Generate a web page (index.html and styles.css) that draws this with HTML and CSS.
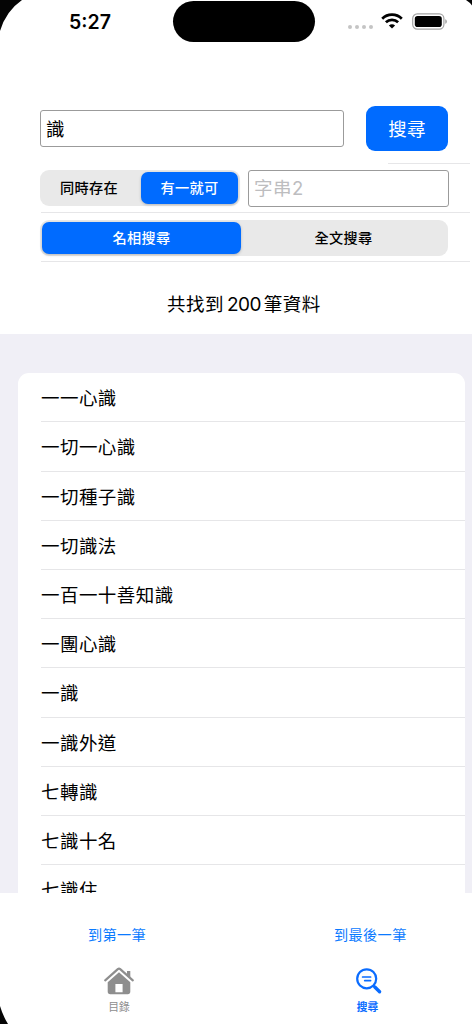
FILE: index.html
```
<!DOCTYPE html>
<html lang="zh-Hant">
<head>
    <meta charset="UTF-8">
    <meta name="viewport" content="width=device-width, initial-scale=1.0">
    <title>搜尋</title>
    <link rel="stylesheet" href="styles.css">
</head>
<body>
    <div class="screen">
        <header class="status-bar">
            <span class="time">5:27</span>
            <div class="island"></div>
            <div class="status-icons">
                <div class="dots"><i></i><i></i><i></i><i></i></div>
                <svg class="wifi" width="22" height="16" viewBox="0 0 22 16" fill="none" stroke="#000" stroke-width="2.7">
                    <path d="M1.2 5.7C6.6.3 15.4.3 20.8 5.7"/>
                    <path d="M4.9 9.3C8.3 6 13.7 6 17.1 9.3"/>
                    <path d="M11 15.6 7.9 12.4C9.6 10.8 12.4 10.8 14.1 12.4Z" fill="#000" stroke="none"/>
                </svg>
                <svg class="battery" width="36" height="17" viewBox="0 0 36 17">
                    <rect x=".7" y=".9" width="31.2" height="15.2" rx="4.6" fill="#fff" stroke="#a3a3a3" stroke-width="1.2"/>
                    <rect x="2.8" y="3" width="27" height="11" rx="2.8"/>
                    <path d="M33.3 6.2c2 .6 2 4 0 4.6z" fill="#999"/>
                </svg>
            </div>
        </header>

        <section class="search-form">
            <div class="form-row row-keyword">
                <input class="field" type="text" value="識">
                <button class="btn-search">搜尋</button>
            </div>
            <div class="form-row row-mode">
                <div class="segment segment-mode">
                    <span class="option">同時存在</span>
                    <span class="option active">有一就可</span>
                </div>
                <input class="field field-second" type="text" placeholder="字串2">
            </div>
            <div class="form-row row-scope">
                <div class="segment segment-scope">
                    <span class="option active">名相搜尋</span>
                    <span class="option">全文搜尋</span>
                </div>
            </div>
            <p class="result-count">共找到<span class="count">200</span>筆資料</p>
        </section>

        <main class="results">
            <ul class="result-list">
                <li>一一心識</li>
                <li>一切一心識</li>
                <li>一切種子識</li>
                <li>一切識法</li>
                <li>一百一十善知識</li>
                <li>一團心識</li>
                <li>一識</li>
                <li>一識外道</li>
                <li>七轉識</li>
                <li>七識十名</li>
                <li>七識住</li>
            </ul>
        </main>

        <footer class="bottom">
            <div class="jump">
                <a class="jump-first">到第一筆</a>
                <a class="jump-last">到最後一筆</a>
            </div>
            <nav class="tabs">
                <a class="tab tab-home">
                    <svg width="32" height="30" viewBox="0 0 32 30">
                        <path d="M2.2 14.3 14.8 3.2Q16 2.2 17.2 3.2L29.8 14.3" fill="none" stroke="#8e8e8e" stroke-width="2.2" stroke-linecap="round"/>
                        <path d="M24 5h3.3v6.6L24 8.7z" fill="#8e8e8e"/>
                        <path fill-rule="evenodd" d="M16 6.3 27.3 16.2V25.6Q27.3 28.2 24.7 28.2H7.3Q4.7 28.2 4.7 25.6V16.2ZM12.4 18V26.2H19.6V18Z" fill="#8e8e8e"/>
                    </svg>
                    <span>目錄</span>
                </a>
                <a class="tab tab-search">
                    <svg width="28" height="30" viewBox="0 0 28 30" fill="none" stroke="#0a6cff" stroke-linecap="round">
                        <circle cx="11.7" cy="12.8" r="9.5" stroke-width="2.2"/>
                        <path d="M18.6 19.8 20 21.2" stroke-width="2.2"/>
                        <path d="M19.8 21 24.6 25.8" stroke-width="3.4"/>
                        <path d="M7.6 11H15.6M9.7 14.6H15.6" stroke-width="1.7"/>
                    </svg>
                    <span>搜尋</span>
                </a>
            </nav>
        </footer>

        <!-- device frame corners -->
        <svg class="corner top-left" width="23" height="32" viewBox="0 0 23 32"><path d="M0 0H22Q6 11 0 31Z"/></svg>
        <svg class="corner top-right" width="6" height="6" viewBox="0 0 6 6"><path d="M0 0H6V5.5Q4 2.5 0 0Z"/></svg>
        <svg class="corner bottom-left" width="9" height="18" viewBox="0 0 9 18"><path d="M0 0Q3 10 8 18H0Z"/></svg>
    </div>
</body>
</html>
```
FILE: styles.css
```
* {
    box-sizing: border-box;
}
body {
    margin: 0;
    font-family: Inter, "Noto Sans CJK TC", sans-serif;
    color: #000;
    background: #fff;
}
.screen {
    position: relative;
    width: 472px;
    height: 1024px;
    display: flex;
    flex-direction: column;
    overflow: hidden;
}

/* status bar */
.status-bar {
    height: 42px;
    display: flex;
    padding-left: 69px;
}
.time {
    width: 104px;
    font-size: 19.5px;
    font-weight: 600;
    line-height: 44px;
}
.island {
    width: 142px;
    height: 41px;
    margin-top: 1px;
    border-radius: 21px;
    background: #000;
}
.status-icons {
    display: flex;
    align-items: flex-start;
    padding-left: 33px;
}
.dots {
    display: flex;
    gap: 2.6px;
    margin-top: 25px;
}
.dots i {
    width: 4.4px;
    height: 4.4px;
    border-radius: 50%;
    background: #c4c4c4;
}
.wifi {
    margin: 13px 0 0 8px;
}
.battery {
    margin: 13px 0 0 9px;
}

/* search form */
.search-form {
    height: 292px;
    padding: 64px 2px 0 40px;
}
.form-row {
    display: flex;
    position: relative;
}
.form-row::after {
    content: "";
    position: absolute;
    left: 1px;
    right: 0;
    bottom: 0;
    height: 1px;
    background: #e6e6e8;
}
.row-keyword {
    height: 58px;
    gap: 22px;
}
.row-keyword::after {
    left: 348px;
}
.row-mode {
    height: 49px;
    padding-top: 6px;
    gap: 8px;
}
.row-scope {
    height: 49px;
    padding-top: 7px;
}
.field {
    width: 304px;
    height: 37px;
    margin-top: 4px;
    padding: 0 6px 1px 5px;
    border: 1.5px solid #9b9b9b;
    border-radius: 3px;
    background: #fff;
    font: inherit;
    font-size: 18.5px;
    letter-spacing: 0.5px;
    color: #000;
    outline: none;
}
.field-second {
    width: 201px;
    margin-top: 0;
}
.field::placeholder {
    color: #bdbdbf;
}
.btn-search {
    width: 82px;
    height: 45px;
    padding: 0 0 1px;
    border: none;
    border-radius: 9px;
    background: #006bff;
    color: #fff;
    font: inherit;
    font-size: 18.5px;
    letter-spacing: 0.3px;
}
.segment {
    display: flex;
    height: 36px;
    padding: 2px;
    border-radius: 9px;
    background: #e9e9e9;
}
.segment-mode {
    width: 200px;
    padding-left: 0;
}
.segment-mode .option {
    flex: 0 0 97px;
}
.segment-mode .option:first-child {
    flex-basis: 101px;
    padding-right: 3px;
}
.segment-scope {
    width: 408px;
}
.segment-scope .option:first-child {
    flex: 0 0 199px;
}
.option {
    flex: 1;
    line-height: 31px;
    border-radius: 7px;
    text-align: center;
    font-size: 14.2px;
    font-weight: 500;
    letter-spacing: 0.3px;
}
.option.active {
    background: #006bff;
    color: #fff;
    box-shadow: 0 1px 3px rgba(0, 0, 0, 0.22);
}
.result-count {
    margin: 28px 0 0 127px;
    font-size: 18.5px;
    line-height: 28px;
    letter-spacing: 0.5px;
}
.count {
    margin: 0 3px;
    font-size: 19px;
    letter-spacing: -0.6px;
}

/* results */
.results {
    height: 559px;
    padding: 39.3px 7px 0 18px;
    background: #f0eff6;
    overflow: hidden;
}
.result-list {
    margin: 0;
    padding: 0 0 0 23px;
    list-style: none;
    background: #fff;
    border-radius: 11px;
}
.result-list li {
    height: 49.2px;
    border-bottom: 1px solid #e6e6e8;
    font-size: 18.5px;
    line-height: 51px;
    letter-spacing: 0.45px;
}

/* bottom area */
.bottom {
    height: 131px;
    background: #fff;
}
.jump {
    display: flex;
    padding: 31px 0 0 88px;
    font-size: 14.2px;
    line-height: 21px;
    letter-spacing: 0.35px;
    color: #0a7aff;
}
.jump-first {
    width: 246px;
}
.tabs {
    display: flex;
    justify-content: space-between;
    padding: 21px 89px 0 103px;
}
.tab {
    display: flex;
    flex-direction: column;
    align-items: center;
    gap: 3px;
    font-size: 10.8px;
    line-height: 18px;
    color: #8e8e8e;
}
.tab-search {
    color: #0a6cff;
    font-weight: 600;
}
.tab-search span {
    margin-right: 3px;
}

.corner {
    position: absolute;
    fill: #050505;
}
.top-left {
    top: 0;
    left: 0;
}
.top-right {
    top: 0;
    right: 0;
}
.bottom-left {
    bottom: 0;
    left: 0;
}
```
